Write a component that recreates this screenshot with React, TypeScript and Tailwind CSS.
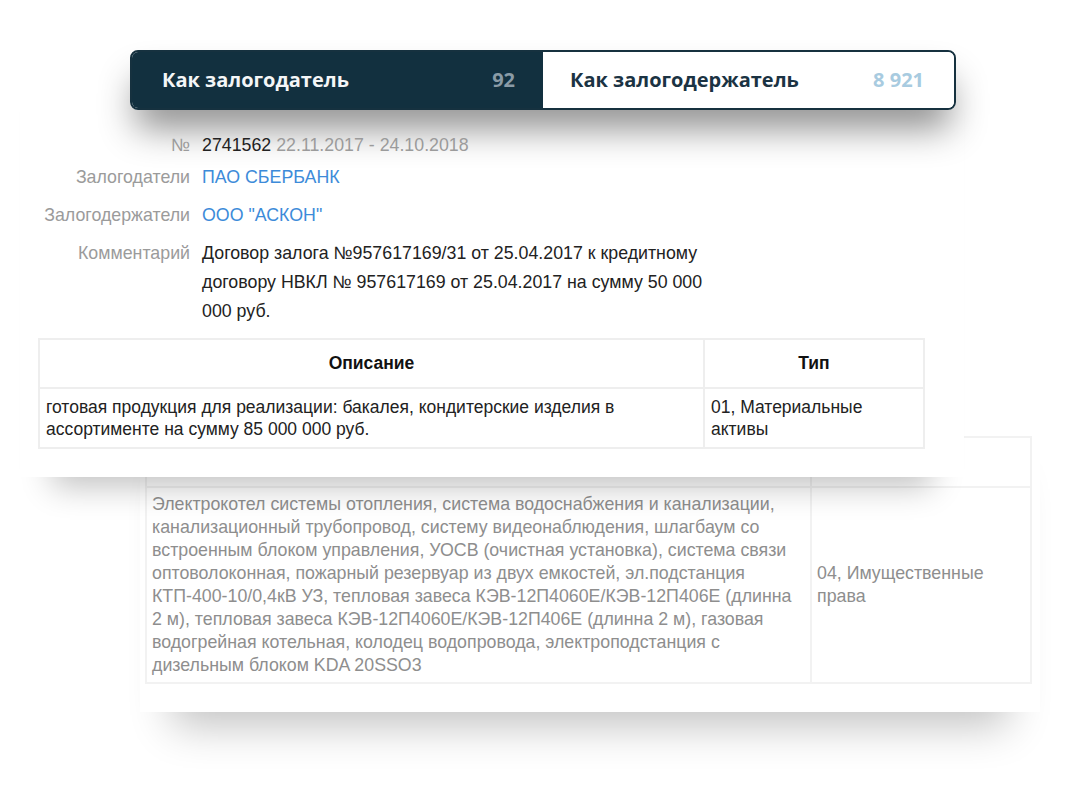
import React from "react";

const comment = [
  "Договор залога №957617169/31 от 25.04.2017 к кредитному",
  "договору НВКЛ № 957617169 от 25.04.2017 на сумму 50 000",
  "000 руб.",
];

const backLines = [
  "Электрокотел системы отопления, система водоснабжения и канализации,",
  "канализационный трубопровод, систему видеонаблюдения, шлагбаум со",
  "встроенным блоком управления, УОСВ (очистная установка), система связи",
  "оптоволоконная, пожарный резервуар из двух емкостей, эл.подстанция",
  "КТП-400-10/0,4кВ УЗ, тепловая завеса КЭВ-12П4060E/КЭВ-12П406E (длинна",
  "2 м), тепловая завеса КЭВ-12П4060E/КЭВ-12П406E (длинна 2 м), газовая",
  "водогрейная котельная, колодец водопровода, электроподстанция с",
  "дизельным блоком KDA 20SSO3",
];

function Row({ label, children, className }: { label: string; children: React.ReactNode; className?: string }) {
  return (
    <div className={"grid grid-cols-[170px_1fr] gap-x-3 leading-[29px] " + (className ?? "")}>
      <div className="text-right text-[#9b9b9b]">{label}</div>
      <div>{children}</div>
    </div>
  );
}

export default function App() {
  return (
    <div className="relative w-[1072px] h-[792px] overflow-hidden bg-white font-['Liberation_Sans',Arial,sans-serif]">
      {/* back card */}
      <div className="absolute left-[140px] top-[400px] w-[900px] h-[312px] bg-white pl-[5px] pt-[36px] shadow-[0_46px_40px_-32px_rgba(0,0,0,0.24)]">
        <table className="w-[887px] border-collapse text-[17.8px] text-[#8e8e8e]">
          <thead>
            <tr className="h-[50px]">
              <th className="w-[665px] border-2 border-[#f2f2f2]"></th>
              <th className="border-2 border-[#f2f2f2]"></th>
            </tr>
          </thead>
          <tbody>
            <tr>
              <td className="border-2 border-[#f2f2f2] px-[5px] py-[5px] leading-[23px] align-middle">
                {backLines.map((l) => (
                  <div key={l} className="whitespace-nowrap">{l}</div>
                ))}
              </td>
              <td className="border-2 border-[#f2f2f2] px-[5px] leading-[23px] align-middle">
                04, Имущественные
                <br />
                права
              </td>
            </tr>
          </tbody>
        </table>
      </div>

      {/* front card */}
      <div className="absolute left-[20px] top-[20px] w-[944px] h-[457px] bg-white shadow-[0_42px_30px_-32px_rgba(0,0,0,0.24)]">
        <div className="ml-[110px] mt-[30px] flex h-[60px] w-[826px] overflow-hidden rounded-[8px] border-2 border-[#16313f] font-['Open_Sans',sans-serif] text-[20px] font-bold shadow-[0_24px_36px_-6px_rgba(0,0,0,0.45)]">
          <div className="flex w-[411px] items-center justify-between bg-[#12303f] pl-[30px] pr-[28px]">
            <span className="text-[#f4f6f7]">Как залогодатель</span>
            <span className="text-[#8a9ba6]">92</span>
          </div>
          <div className="flex flex-1 items-center justify-between bg-white pl-[27px] pr-[30px]">
            <span className="text-[#1b3343]">Как залогодержатель</span>
            <span className="text-[#a8cbe0]">8 921</span>
          </div>
        </div>

        <div className="mt-[21px] text-[17.8px] text-[#222]">
          <Row label="№" className="mb-[3px]">
            2741562 <span className="text-[#9b9b9b]">22.11.2017 - 24.10.2018</span>
          </Row>
          <Row label="Залогодатели" className="mb-[9px]">
            <span className="text-[#3d8bd9]">ПАО СБЕРБАНК</span>
          </Row>
          <Row label="Залогодержатели" className="mb-[9px]">
            <span className="text-[#3d8bd9]">ООО "АСКОН"</span>
          </Row>
          <Row label="Комментарий">
            {comment.map((l) => (
              <div key={l} className="whitespace-nowrap">{l}</div>
            ))}
          </Row>
        </div>

        <table className="ml-[18px] mt-[12px] w-[887px] border-collapse text-[17.5px] text-[#222]">
          <thead>
            <tr className="h-[49px]">
              <th className="w-[665px] border-2 border-[#eeeeee] font-bold text-[#111]">Описание</th>
              <th className="border-2 border-[#eeeeee] font-bold text-[#111]">Тип</th>
            </tr>
          </thead>
          <tbody>
            <tr>
              <td className="border-2 border-[#eeeeee] px-[6px] py-[7px] leading-[22px] align-middle">
                готовая продукция для реализации: бакалея, кондитерские изделия в
                <br />
                ассортименте на сумму 85 000 000 руб.
              </td>
              <td className="border-2 border-[#eeeeee] px-[6px] py-[7px] leading-[22px] align-middle">
                01, Материальные
                <br />
                активы
              </td>
            </tr>
          </tbody>
        </table>
      </div>
    </div>
  );
}
